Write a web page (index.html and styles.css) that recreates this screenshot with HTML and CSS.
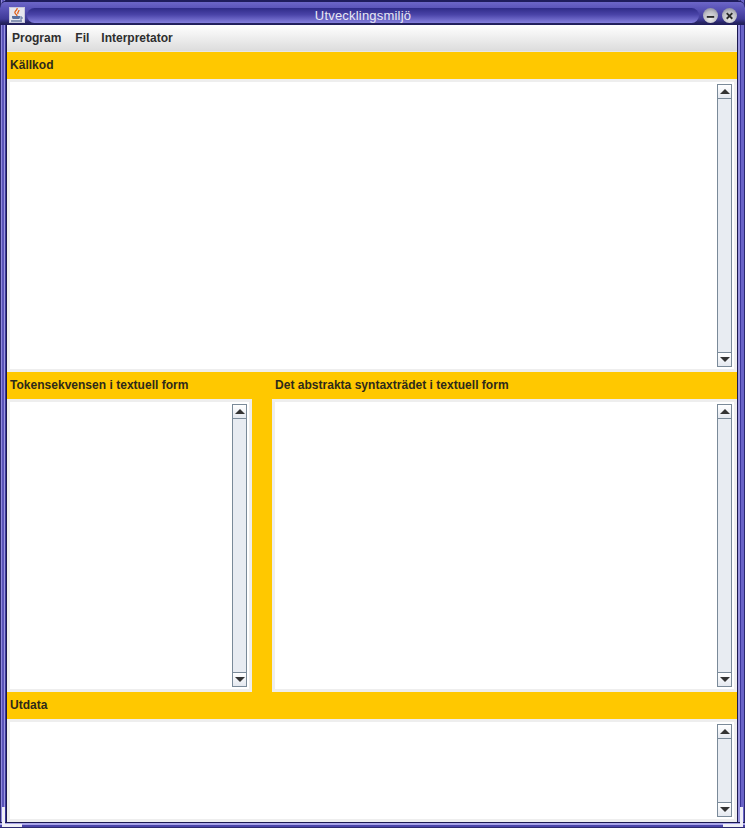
FILE: index.html
```html
<!DOCTYPE html>
<html lang="en">
<head>
    <meta charset="UTF-8">
    <title>Utvecklingsmiljö</title>
    <link rel="stylesheet" href="styles.css">
</head>
<body>
    <div class="window">
        <!-- Title bar -->
        <div class="titlebar">
            <div class="app-icon">
                <svg width="14" height="14" viewBox="0 0 14 14">
                    <path d="M7 0c1 2-3 3-2 5s2 1 2 3M9 2c0 2-2 2-1 4" fill="none" stroke="#e05a10" stroke-width="1.2"/>
                    <path d="M2 8h8v1c0 2-1 2-2 2H4c-1 0-2 0-2-2z" fill="#5a6f9e"/>
                    <path d="M10 9h2v2h-2" fill="none" stroke="#5a6f9e"/>
                    <path d="M1 13h11" stroke="#4a5f8e" stroke-width="1.2"/>
                </svg>
            </div>
            <div class="title-pill">Utvecklingsmiljö</div>
            <div class="win-btn">
                <svg width="14" height="14" viewBox="0 0 14 14"><path d="M3 8.5h8" stroke="#2a2a2a" stroke-width="2"/></svg>
            </div>
            <div class="win-btn">
                <svg width="14" height="14" viewBox="0 0 14 14"><path d="M4 4.5l6 6M10 4.5l-6 6" stroke="#2a2a2a" stroke-width="2"/></svg>
            </div>
        </div>

        <!-- Menu -->
        <div class="menubar">
            <span class="menu-item">Program</span>
            <span class="menu-item">Fil</span>
            <span class="menu-item">Interpretator</span>
        </div>

        <div class="content">
            <div class="label">Källkod</div>
            <div class="pane pane-source">
                <div class="text-area"></div>
                <div class="scrollbar">
                    <div class="arrow-btn"><span class="arrow-up"></span></div>
                    <div class="track"></div>
                    <div class="arrow-btn"><span class="arrow-down"></span></div>
                </div>
            </div>

            <div class="split">
                <div class="column">
                    <div class="label">Tokensekvensen i textuell form</div>
                    <div class="pane pane-middle">
                        <div class="text-area"></div>
                        <div class="scrollbar">
                            <div class="arrow-btn"><span class="arrow-up"></span></div>
                            <div class="track"></div>
                            <div class="arrow-btn"><span class="arrow-down"></span></div>
                        </div>
                    </div>
                </div>
                <div class="column">
                    <div class="label">Det abstrakta syntaxträdet i textuell form</div>
                    <div class="pane pane-middle">
                        <div class="text-area"></div>
                        <div class="scrollbar">
                            <div class="arrow-btn"><span class="arrow-up"></span></div>
                            <div class="track"></div>
                            <div class="arrow-btn"><span class="arrow-down"></span></div>
                        </div>
                    </div>
                </div>
            </div>

            <div class="label">Utdata</div>
            <div class="pane pane-output">
                <div class="text-area"></div>
                <div class="scrollbar">
                    <div class="arrow-btn"><span class="arrow-up"></span></div>
                    <div class="track"></div>
                    <div class="arrow-btn"><span class="arrow-down"></span></div>
                </div>
            </div>
        </div>
        <div class="corner corner-left"></div>
        <div class="corner corner-right"></div>
    </div>
</body>
</html>
```

FILE: styles.css
```css
/* Window frame */
html, body {
    margin: 0;
    padding: 0;
}
body {
    width: 745px;
    height: 828px;
    overflow: hidden;
    background-color: #3a3580;
    font-family: "Liberation Sans", Arial, sans-serif;
}
.window {
    position: relative;
    width: 745px;
    height: 828px;
    box-sizing: border-box;
    padding: 0 8px 6px 7px;
    display: flex;
    flex-direction: column;
    background: linear-gradient(to right, #2c2a70 0, #2c2a70 1px, #8f88dc 1px, #8f88dc 2px, #5a54b8 2px, #5a54b8 4px, #9a96e0 4px, #9a96e0 5px, #3a359a 5px, #3a359a 6px, #1a1850 6px, #1a1850 7px, transparent 7px),
                linear-gradient(to left, #2c2a70 0, #2c2a70 1px, #6a64c8 1px, #6a64c8 4px, #3a359a 4px, #3a359a 5px, #9a96e0 5px, #9a96e0 7px, #1a1850 7px, #1a1850 8px, transparent 8px);
    background-color: #4a44a8;
}

/* Title bar */
.titlebar {
    height: 25px;
    margin: 0 -8px 0 -7px;
    padding: 4px 8px 0 9px;
    box-sizing: border-box;
    display: flex;
    align-items: center;
    border-top: 1px solid #1f1d5c;
    border-radius: 8px 8px 0 0;
    background: linear-gradient(to bottom, #1f1d5c 0, #1f1d5c 1px, #6d67c8 1px, #5a54b8 30%, #3f3a98 75%, #25235f 92%, #1f1d5c 100%);
}
.app-icon {
    width: 16px;
    height: 16px;
    box-sizing: border-box;
    margin-right: 2px;
    background-color: #e6e6ee;
    border: 1px solid #c8c8dc;
    flex-shrink: 0;
}
.title-pill {
    flex: 1;
    height: 15px;
    border-radius: 8px;
    background: linear-gradient(to bottom, #2f2b88 0, #4a44a8 45%, #8580de 100%);
    color: #e8e8f4;
    font-size: 13px;
    line-height: 15px;
    letter-spacing: 0.2px;
    text-align: center;
}
.win-btn {
    width: 15px;
    height: 15px;
    margin-left: 4px;
    border-radius: 50%;
    background: radial-gradient(circle at 50% 70%, #ececec 0, #bcbcc2 55%, #6f6f88 100%);
    display: flex;
    align-items: center;
    justify-content: center;
}
.win-btn svg {
    width: 13px;
    height: 13px;
}

/* Menu */
.menubar {
    height: 27px;
    padding-left: 5px;
    display: flex;
    align-items: center;
    gap: 12px;
    box-sizing: border-box;
    border-bottom: 1px solid #e6e6e6;
    background: linear-gradient(to bottom, #ffffff, #dcdcdc);
}
.menu-item {
    font-size: 12px;
    font-weight: bold;
    color: #2e2e2e;
}
.menu-item:first-child {
    margin-right: 2px;
}

/* Content */
.content {
    flex: 1;
    display: flex;
    flex-direction: column;
    min-height: 0;
    background-color: #ffc800;
}
.label {
    height: 27px;
    padding-left: 3px;
    font-size: 12px;
    font-weight: bold;
    line-height: 27px;
    letter-spacing: 0.02px;
    color: #2e2a1a;
    background-color: #ffc800;
}
.pane {
    display: flex;
    box-sizing: border-box;
    border: 3px solid #eeeeee;
    background-color: #ffffff;
}
.pane-source,
.pane-middle {
    height: 293px;
}
.pane-output {
    flex: 1;
    min-height: 0;
}
.split {
    display: grid;
    grid-template-columns: 245px 465px;
    column-gap: 20px;
}
.text-area {
    flex: 1;
}

/* Scroll bars */
.scrollbar {
    width: 15px;
    margin: 2px 2px 2px 0;
    display: flex;
    flex-direction: column;
}
.arrow-btn {
    height: 15px;
    box-sizing: border-box;
    border: 1px solid #7a8a99;
    background: linear-gradient(to bottom, #ffffff, #e4e8ef);
    display: flex;
    align-items: center;
    justify-content: center;
}
.track {
    flex: 1;
    box-sizing: border-box;
    border-left: 1px solid #7a8a99;
    border-right: 1px solid #7a8a99;
    background-color: #e8ecf2;
}
.arrow-up {
    width: 0;
    height: 0;
    border-left: 5px solid transparent;
    border-right: 5px solid transparent;
    border-bottom: 5px solid #333333;
}
.arrow-down {
    width: 0;
    height: 0;
    border-left: 5px solid transparent;
    border-right: 5px solid transparent;
    border-top: 5px solid #333333;
}

/* Bottom edge and resize corners */
.window::after {
    content: "";
    position: absolute;
    left: 0;
    right: 0;
    bottom: 0;
    height: 6px;
    box-sizing: border-box;
    border-top: 1px solid #1a1850;
    border-bottom: 1px solid #2c2a70;
    background: linear-gradient(to bottom, #a8a4e8 0, #a8a4e8 2px, #4a44a8 2px);
}
.corner {
    position: absolute;
    bottom: 1px;
    width: 20px;
    height: 20px;
    box-sizing: border-box;
    z-index: 1;
}
.corner-left {
    left: 2px;
    border-left: 3px solid #eeeef6;
    border-bottom: 3px solid #eeeef6;
}
.corner-right {
    right: 2px;
    border-right: 3px solid #eeeef6;
    border-bottom: 3px solid #eeeef6;
}
```
